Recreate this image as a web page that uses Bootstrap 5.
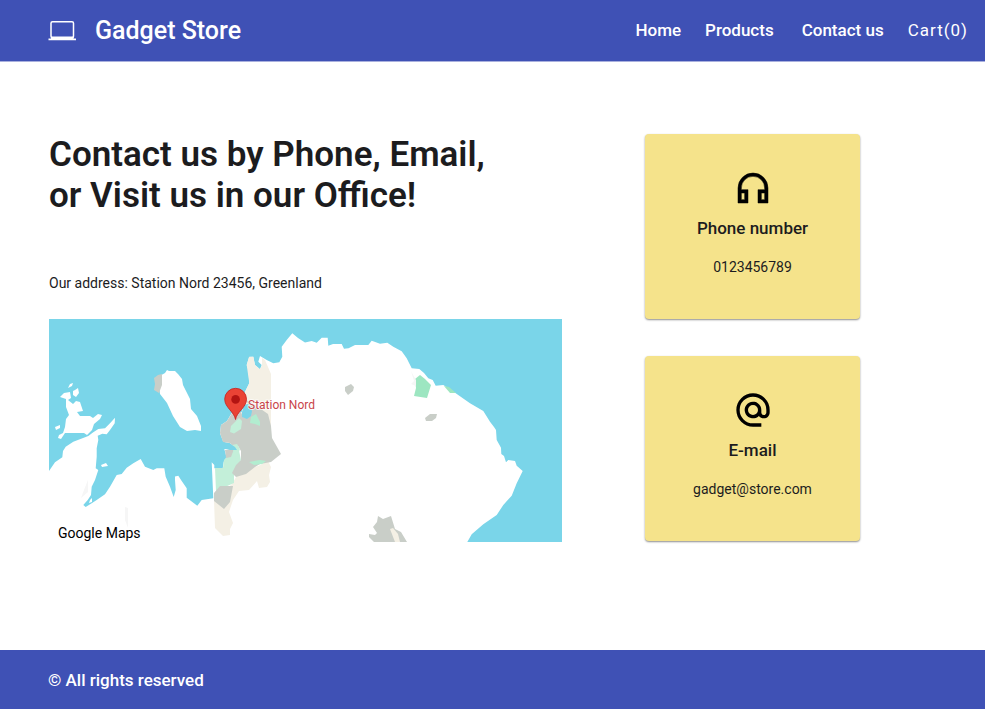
<!DOCTYPE html>
<html lang="en">
<head>
<meta charset="utf-8">
<meta name="viewport" content="width=device-width, initial-scale=1">
<title>Gadget Store</title>
<link href="https://cdn.jsdelivr.net/npm/bootstrap@5.3.0/dist/css/bootstrap.min.css" rel="stylesheet">
<style>
  body { font-family: Roboto, "Liberation Sans", sans-serif; font-size: 14px; line-height: 20px; color: #1c1c1e; background: #fff; }
  .site-bar { background: #3f51b5; color: #fff; }
  .site-header { min-height: 62px; padding: 8px 17px 8px 48px; border-bottom: 1px solid #a9b0de; }
  .site-name { font-size: 25px; line-height: 32px; font-weight: 500; color: #fff; gap: 18px; }
  .site-name:hover { color: #fff; }
  .site-nav { gap: 24px; padding-bottom: 2px; }
  .site-nav a { padding: 0; font-size: 17px; line-height: 24px; font-weight: 500; color: #fff; }
  .site-nav a:hover { text-decoration: underline; }
  .site-nav .cart-link { font-weight: 400; letter-spacing: 1px; }
  .page-main { padding: 72px 49px; gap: 83px; }
  .headline { font-size: 35px; line-height: 41px; font-weight: 600; margin: 0 0 57px; }
  .address { margin: 0 0 26px; }
  .map-credit { left: 9px; bottom: 0; line-height: 18px; color: #000; }
  .contact-list { width: 215px; gap: 37px; }
  .contact-card { background: #f5e38b; border: 0; border-radius: 4px; min-height: 185px; padding: 34px 16px 24px; box-shadow: 0 1px 2px rgba(0,0,0,.45); color: #1c1c1e; }
  .contact-card h2 { font-size: 17px; line-height: 24px; font-weight: 500; margin: 8px 0 17px; }
  .contact-card a { color: inherit; text-decoration: none; }
  .site-footer { min-height: 59px; padding: 8px 48px; font-size: 17px; line-height: 24px; font-weight: 500; }
  @media (min-width: 768px) { .page-main { padding-right: 125px; } }
</style>
</head>
<body class="d-flex flex-column min-vh-100">
<header class="site-bar site-header d-flex flex-wrap align-items-center justify-content-between">
  <a class="site-name d-flex align-items-center text-decoration-none" href="#">
    <svg width="29" height="22" viewBox="0 0 29 22" fill="none" aria-hidden="true">
      <rect x="3" y="1.700" width="22.500" height="16" rx="1.500" stroke="#fff" stroke-width="1.500"/>
      <path d="M3 16.500h22.500v2h2.500v1.700H.500v-1.700H3z" fill="#fff"/>
    </svg>
    <span>Gadget Store</span>
  </a>
  <nav class="site-nav nav align-items-center" aria-label="Main">
    <a class="nav-link" href="#">Home</a>
    <a class="nav-link me-1" href="#">Products</a>
    <a class="nav-link" href="#">Contact us</a>
    <a class="nav-link cart-link" href="#">Cart(0)</a>
  </nav>
</header>

<main class="page-main d-flex flex-column flex-md-row flex-grow-1">
  <section class="flex-grow-1">
    <h1 class="headline">Contact us by Phone, Email,<br>or Visit us in our Office!</h1>
    <p class="address">Our address: Station Nord 23456, Greenland</p>
    <div class="position-relative">
      <svg class="d-block w-100 h-auto" viewBox="49 319 513 223" role="img" aria-label="Map of Station Nord">
        <rect x="49" y="319" width="513" height="223" fill="#7ad5e9"/>
        <!-- mainland -->
        <path fill="#fff" d="M49 471L55 462.300L62.300 457.300L63 451L65.700 446.700L73.300 441.700L88.300 436L93.300 432.300L98.300 429L105 428.300L110 423.300L115 417.700L114.700 423.300L110 430L106.700 434.300L102.300 433.700L97.700 435.700L98.300 440L96.700 448.300L96.700 456.700L95.700 468.300L98.300 470L95 480L91.700 486.700L91 495L87.700 500L83.300 505L85.700 507L91.700 503.300L96.700 500L105 494.300L110 486.700L116.700 475L121.700 474L126.700 467.700L133.300 463.300L140.700 459L145 466.700L153.300 470L156.700 468.300L164.300 468.300L165.700 476.700L170 486.700L173.700 497L175.700 490L175 480L175 476.500L178.300 475.700L181.700 481L186.700 488.300L186.700 497.700L197.300 505.700L201.700 500L213.300 498.300L211.700 462.300L214.300 465V468.300H222.700L223.700 461.700L226.700 457.700L224.300 449L236.700 450L230 443.300L223.300 441.700L220 433.300L221 425L227 421L231.700 413L241.700 411.700L242.300 416.700L248.300 418.300L251.700 413.300L251 408L244 403L243.300 398L245 391.700L249.300 383.300L248.500 370L246.700 365L249.300 356.700L253.300 356.700L255 365L260 369.300L261.700 365L258.300 361.700L260 356L266.700 360L273.300 363.300L279.300 362.300L282.300 356.700L281.700 346.700L286.700 340L292.300 333.300L298 338L305 342.500L311.700 341L316.700 342.700L321.700 337.700H327.700L328.300 345.700L333 344L341.700 344L344 348.700L348.500 348.300L355 345H368.300L371.700 340.700L380 343.700L387.300 342.700L393.300 346.700L401.700 351.300L406.700 358.300L411.700 368.300L419.300 369L424 373L428.300 378.300L432.700 380L435.700 385.700L443.300 385L455 392.700L470 403.300L483.300 411L490 421.700L494 427L496 430L496.700 440L501 447.700L501.300 454L504 456L506 462.300L508.300 460L515 461L516.700 465.700L522.700 471L516.700 483.300L511.700 495.700L503.300 505L496.700 515L483.300 524.300L471.700 534.300L467.300 542H49z"/>
        <!-- islands -->
        <path fill="#fff" d="M158 377L165 373L167 370L169 371H175L178 374L182 379L183 385L186 391L190 399L191 409L197 416L201 426L201 431L195 430L187 431L180 427L173 416L167 403L160 394z"/>
        <path fill="#fff" d="M70 384L73 383L72 386L68 388zM75 390L78 388L79 393L76 397L73 395V391zM60 397L64 393L70 392L71 398L68 400L73 404L76 401L80 402L83 411L77 412L80 416L90 416L93 418L98 414L102 415L100 419L94 424L92 430L87 435L84 433H73L65 433L61 439L58 438L59 435L63 433L65 427L66 419L69 415L66 407L66 399zM55 427L60 425L60 428L56 430zM101 465L106 463L108 466L102 467zM90 500L92 498L92 502L89 503z"/>
        <!-- lowland -->
        <path fill="#f4f0e5" d="M246.700 365L249 357L253.300 356.700L255 365L260 369.300L262 365L262 358L265 360L271 374V431L242 411L245 392L249.300 383z"/>
        <path fill="#f4f0e5" d="M268 461L271 467L269 475L270 482L267 487L259 488L257 481L249 490L239 491L233 500L229 512L233 523L230 529V535L223 536L215 528L214 500L232 484L239 472L258 466z"/>
        <path fill="#c3efd9" d="M215 468H223L224 460L232 450L238 446L241 460L234 474L234 483L216 491z"/>
        <!-- bare ground -->
        <path fill="#c9cec8" d="M154 378L158 375L162 374L162 385L159 393L154 390L155 384zM220 433L221 425L227 421L232 413L241 412L243 417L248 418L250 408L246 400L255 405L268 414L271 426L272 438L281 454L271 462L260 464L255 467L246 474L236 477L232 473L236 465L241 460V451L238 446L236 450L230 443L223 442zM225 450L234 449L231 457L226 458zM214 493L220 486H233L230 502L224 509L214 501zM345 387L351 384L354 387L353 391L348 395L345 391zM425 418L430 414L437 414L436 418L432 421L426 421zM374 542L369 537V534L375 535L377 533L373 527L377 522L378 516L383 519L391 516L395 529L401 532L407 542z"/>
        <path fill="#7ad5e9" d="M243 405L248 404L252 411L251 416L247 419L242 417z"/>
        <path fill="#c3efd9" d="M230 432L231 426L239 418L242 421L241 429L234 433.500z"/>
        <path fill="#b2edd0" d="M250 423L251 417L256 414L260 422V426L255 424zM249 462L260 460L266 461L262 464L254 465z"/>
        <path fill="#c3efd9" d="M233 449L232 445L237 444L240 449L236 460z"/>
        <path fill="#7ad5e9" d="M224 444L229 443L235 447L237 450L230 450L224 448z"/>
        <path fill="#9de6c1" d="M415 379L420 375L425 379L431 385L427 398L414 396L416 388zM444 386L449 387L456 393L450 393z"/>
        <path fill="#f4f0e5" d="M390 529L393 528L398 534L400 542H395z"/>
        <path fill="#f6f6f6" d="M88 480L88 492L81 498L84 490zM125 507L128 508L128 528L125 520zM411 371L416 380L416 386L411 384L414 381z"/>
        <!-- pin -->
        <path fill="#ea4335" stroke="#c5221f" stroke-width=".8" d="M235.500 419.500C234.500 412 224.700 407.500 224.700 399.200A10.900 10.900 0 0 1 246.500 399.200C246.500 407.500 236.500 412 235.500 419.500z"/>
        <circle cx="235.600" cy="399.400" r="4.300" fill="#b31412"/>
        <text x="248" y="409" font-size="12" fill="#c9444a" stroke="#fff" stroke-width="2" stroke-opacity=".7" paint-order="stroke">Station Nord</text>
      </svg>
      <span class="map-credit position-absolute">Google Maps</span>
    </div>
  </section>

  <aside class="contact-list d-flex flex-column flex-shrink-0" aria-label="Contact details">
    <section class="contact-card card align-items-center text-center">
      <svg width="40" height="40" viewBox="0 0 24 24" aria-hidden="true"><path d="M12 3a9 9 0 0 0-9 9v9h6v-8H5v-1a7 7 0 0 1 14 0v1h-4v8h6v-9a9 9 0 0 0-9-9zM7 15v4H5v-4h2zm12 4h-2v-4h2v4z" stroke="#000" stroke-width=".3"/></svg>
      <h2>Phone number</h2>
      <a href="tel:0123456789">0123456789</a>
    </section>
    <section class="contact-card card align-items-center text-center">
      <svg width="40" height="40" viewBox="0 0 24 24" aria-hidden="true"><path d="M12 2a10 10 0 0 0 0 20h5v-2h-5a8 8 0 1 1 8-8v1.430c0 .790-.710 1.570-1.500 1.570s-1.500-.780-1.500-1.570V12a5 5 0 1 0-1.460 3.540c.650.890 1.770 1.460 2.960 1.460 1.970 0 3.500-1.600 3.500-3.570V12A10 10 0 0 0 12 2zm0 13a3 3 0 1 1 0-6 3 3 0 0 1 0 6z"/></svg>
      <h2>E-mail</h2>
      <a href="mailto:gadget@store.com">gadget@store.com</a>
    </section>
  </aside>
</main>

<footer class="site-bar site-footer d-flex align-items-center">© All rights reserved</footer>
<script src="https://cdn.jsdelivr.net/npm/bootstrap@5.3.0/dist/js/bootstrap.bundle.min.js"></script>
</body>
</html>
